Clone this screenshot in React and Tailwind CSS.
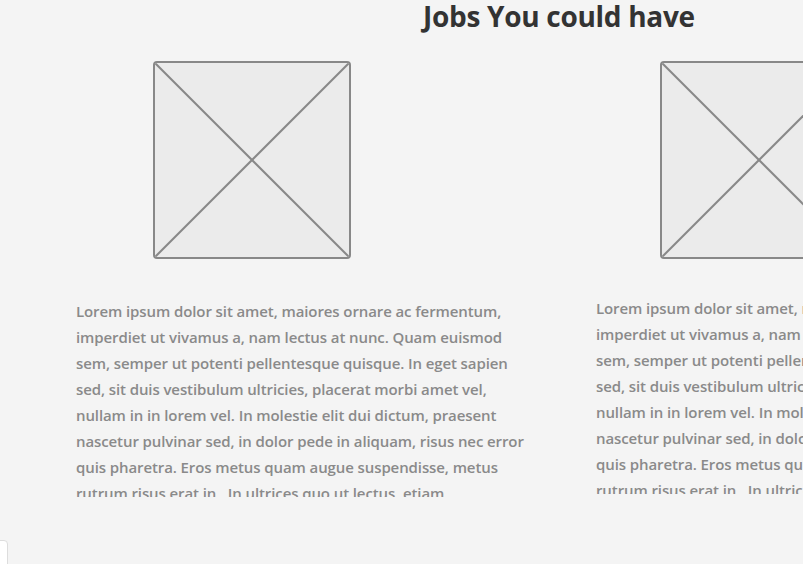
import React from "react";

const lorem =
  "Lorem ipsum dolor sit amet, maiores ornare ac fermentum, imperdiet ut vivamus a, nam lectus at nunc. Quam euismod sem, semper ut potenti pellentesque quisque. In eget sapien sed, sit duis vestibulum ultricies, placerat morbi amet vel, nullam in in lorem vel. In molestie elit dui dictum, praesent nascetur pulvinar sed, in dolor pede in aliquam, risus nec error quis pharetra. Eros metus quam augue suspendisse, metus rutrum risus erat in.  In ultrices quo ut lectus, etiam\nvestibulum urna, a est pretium luctus euismod.";

const Placeholder = () => (
  <div className="w-[198px] h-[198px] shrink-0 rounded-[4px] border-2 border-[#888888] bg-[#ebebeb] overflow-hidden">
    <svg viewBox="0 0 194 194" className="w-full h-full block" preserveAspectRatio="none">
      <line x1="0" y1="0" x2="194" y2="194" stroke="#888888" strokeWidth="2" />
      <line x1="194" y1="0" x2="0" y2="194" stroke="#888888" strokeWidth="2" />
    </svg>
  </div>
);

const JobColumn = ({ imgOffset, textTop }) => (
  <div className="w-[452px] shrink-0 flex flex-col">
    <div style={{ paddingLeft: imgOffset }}>
      <Placeholder />
    </div>
    <p
      className="h-[199px] overflow-hidden text-[15px] leading-[26px] font-semibold tracking-[-0.1px] text-[#8a8a8a] whitespace-pre-wrap"
      style={{ marginTop: textTop }}
    >
      {lorem}
    </p>
  </div>
);

export default function App() {
  return (
    <div
      className="relative w-[803px] h-[564px] overflow-hidden bg-[#f4f4f4]"
      style={{ fontFamily: '"Open Sans", "Noto Sans", sans-serif' }}
    >
      <h2 className="pl-[423px] text-[28px] leading-[32px] font-bold text-[#333333] tracking-[-0.3px]">
        Jobs You could have
      </h2>
      <div className="flex gap-[68px] pl-[76px] pt-[29px]">
        <JobColumn imgOffset={77} textTop={39} />
        <JobColumn imgOffset={64} textTop={36} />
      </div>
      <div className="absolute left-[-4px] top-[540px] w-[12px] h-[30px] bg-white border border-[#dddddd] rounded-tr-[4px]" />
    </div>
  );
}
